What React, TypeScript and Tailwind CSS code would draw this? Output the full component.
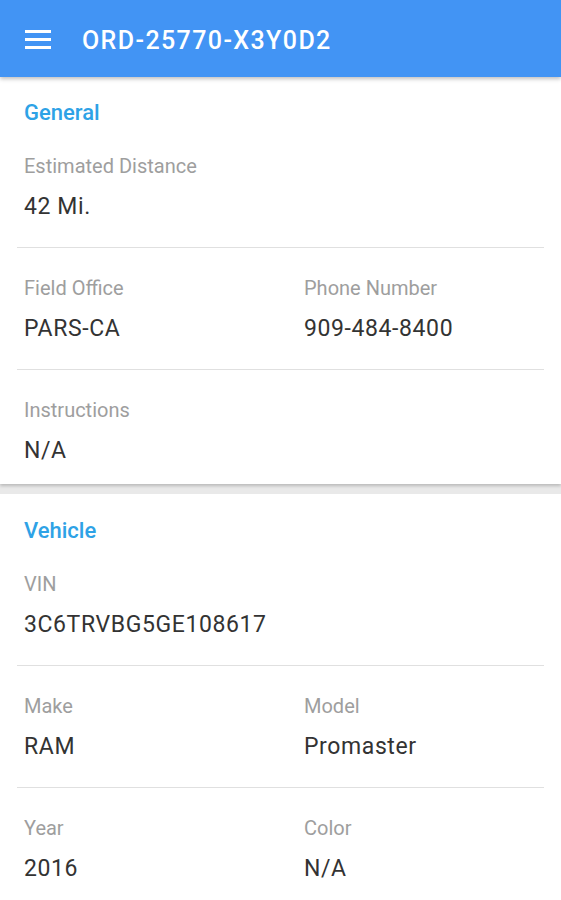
const general = [
  [{ label: "Estimated Distance", value: "42 Mi." }],
  [
    { label: "Field Office", value: "PARS-CA" },
    { label: "Phone Number", value: "909-484-8400" },
  ],
  [{ label: "Instructions", value: "N/A" }],
];

const vehicle = [
  [{ label: "VIN", value: "3C6TRVBG5GE108617" }],
  [
    { label: "Make", value: "RAM" },
    { label: "Model", value: "Promaster" },
  ],
  [
    { label: "Year", value: "2016" },
    { label: "Color", value: "N/A" },
  ],
];

type Field = { label: string; value: string };

function Section({ title, rows, top }: { title: string; rows: Field[][]; top: string }) {
  return (
    <section className="bg-white px-[17px]">
      <h2 className={`px-[7px] ${top} mb-[25px] text-[22px] leading-[28px] font-medium text-[#2ea2e6]`}>
        {title}
      </h2>
      {rows.map((row, i) => (
        <div
          key={i}
          className={`flex ${i > 0 ? "border-t border-[#e0e0e0] pt-[26px]" : ""} ${
            i === rows.length - 1 ? "pb-[17px]" : "pb-[24px]"
          }`}
        >
          {row.map((f, j) => (
            <div key={f.label} className={`px-[7px] ${j === 0 ? "w-[280px] shrink-0" : "flex-1"}`}>
              <div className="text-[20px] leading-[28px] text-[#9e9e9e]">{f.label}</div>
              <div className="mt-[11px] text-[23px] leading-[32px] tracking-[0.6px] text-[#333333]">{f.value}</div>
            </div>
          ))}
        </div>
      ))}
    </section>
  );
}

export default function App() {
  return (
    <div className="min-h-[900px] w-[561px] bg-[#e9e9e9]" style={{ fontFamily: "Roboto, 'Noto Sans', sans-serif" }}>
      <header className="relative z-10 flex h-[77px] items-center bg-[#4294f4] pt-[2px] shadow-[0_2px_4px_rgba(0,0,0,0.25)]">
        <div className="ml-[25px] flex w-[26px] flex-col gap-[5px]">
          <span className="h-[3px] bg-white" />
          <span className="h-[3px] bg-white" />
          <span className="h-[3px] bg-white" />
        </div>
        <h1 className="ml-[31px] pt-[2px] text-[25px] font-medium tracking-[1.4px] text-white">ORD-25770-X3Y0D2</h1>
      </header>
      <div className="relative shadow-[0_2px_3px_rgba(0,0,0,0.2)]">
        <Section title="General" rows={general} top="pt-[22px]" />
      </div>
      <div className="mt-[10px]">
        <Section title="Vehicle" rows={vehicle} top="pt-[23px]" />
      </div>
    </div>
  );
}
